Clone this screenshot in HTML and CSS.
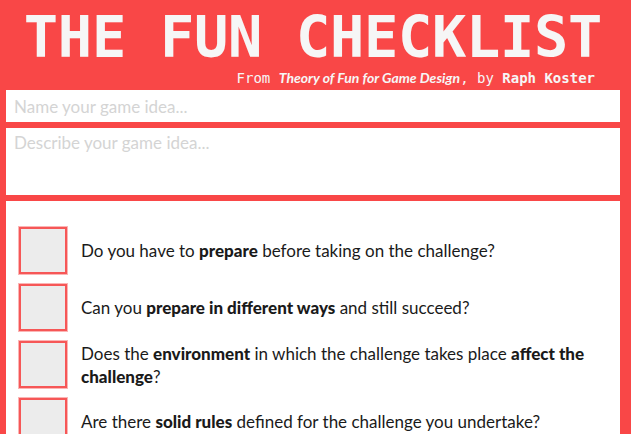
FILE: index.html
```html
<!DOCTYPE html>
<html lang="en">
<head>
<meta charset="utf-8">
<title>The Fun Checklist</title>
<link rel="stylesheet" href="styles.css">
</head>
<body>
<div class="page">
  <header class="header">
    <h1 class="title">THE FUN CHECKLIST</h1>
    <p class="subtitle">From <em class="book">Theory of Fun for Game Design</em>, by <strong>Raph Koster</strong></p>
  </header>
  <input class="field name" type="text" placeholder="Name your game idea...">
  <textarea class="field desc" placeholder="Describe your game idea..."></textarea>
  <section class="checklist">
    <ul class="items">
      <li class="item"><span class="box"></span><span class="q">Do you have to <b>prepare</b> before taking on the challenge?</span></li>
      <li class="item"><span class="box"></span><span class="q">Can you <b>prepare in different ways</b> and still succeed?</span></li>
      <li class="item"><span class="box"></span><span class="q">Does the <b>environment</b> in which the challenge takes place <b>affect the challenge</b>?</span></li>
      <li class="item"><span class="box"></span><span class="q">Are there <b>solid rules</b> defined for the challenge you undertake?</span></li>
    </ul>
  </section>
</div>
</body>
</html>
```
FILE: styles.css
```css
html, body {
  margin: 0;
  padding: 0;
  background: #f94747;
  overflow: hidden;
}
.page {
  padding: 0 11px 0 6px;
  display: flex;
  flex-direction: column;
}
.header {
  height: 90px;
  display: flex;
  flex-direction: column;
}
.title {
  margin: 9px 0 0;
  font-family: "DejaVu Sans Mono", "Liberation Mono", monospace;
  font-weight: bold;
  font-size: 57px;
  line-height: 1;
  color: #f6f6f6;
  text-align: center;
  letter-spacing: -0.3px;
}
.subtitle {
  margin: 4px 0 0;
  padding-right: 25px;
  text-align: right;
  font-family: "DejaVu Sans Mono", "Liberation Mono", monospace;
  font-size: 14px;
  line-height: 16px;
  color: #f6f6f6;
}
.book {
  font-family: Lato, "Open Sans", sans-serif;
  font-style: italic;
  font-weight: bold;
  font-size: 14px;
}
.subtitle strong {
  font-weight: bold;
}
.field {
  display: block;
  box-sizing: border-box;
  width: 100%;
  margin: 0;
  border: none;
  outline: none;
  background: #fff;
  font-family: Lato, "Open Sans", sans-serif;
  font-size: 17px;
  color: #222;
  padding: 0 8px;
  resize: none;
}
.field::placeholder {
  color: #d4d4d4;
}
.name {
  height: 32px;
}
.desc {
  height: 67px;
  margin-top: 6px;
  padding-top: 5px;
  line-height: 1.2;
}
.checklist {
  margin-top: 6px;
  background: #fff;
  padding: 26px 13px 20px;
  min-height: 300px;
}
.items {
  list-style: none;
  margin: 0;
  padding: 0;
  display: flex;
  flex-direction: column;
  gap: 10px;
}
.item {
  display: flex;
  align-items: center;
  gap: 14px;
  font-family: Lato, "Open Sans", sans-serif;
  font-size: 17px;
  line-height: 23px;
  color: #1a1a1a;
}
.box {
  flex: none;
  box-sizing: border-box;
  width: 48px;
  height: 47px;
  border: 2px solid #f65757;
  box-shadow: 0 0 0 1px #fbb5b5;
  background: #ececec;
}
.q b {
  font-weight: 900;
}
```
